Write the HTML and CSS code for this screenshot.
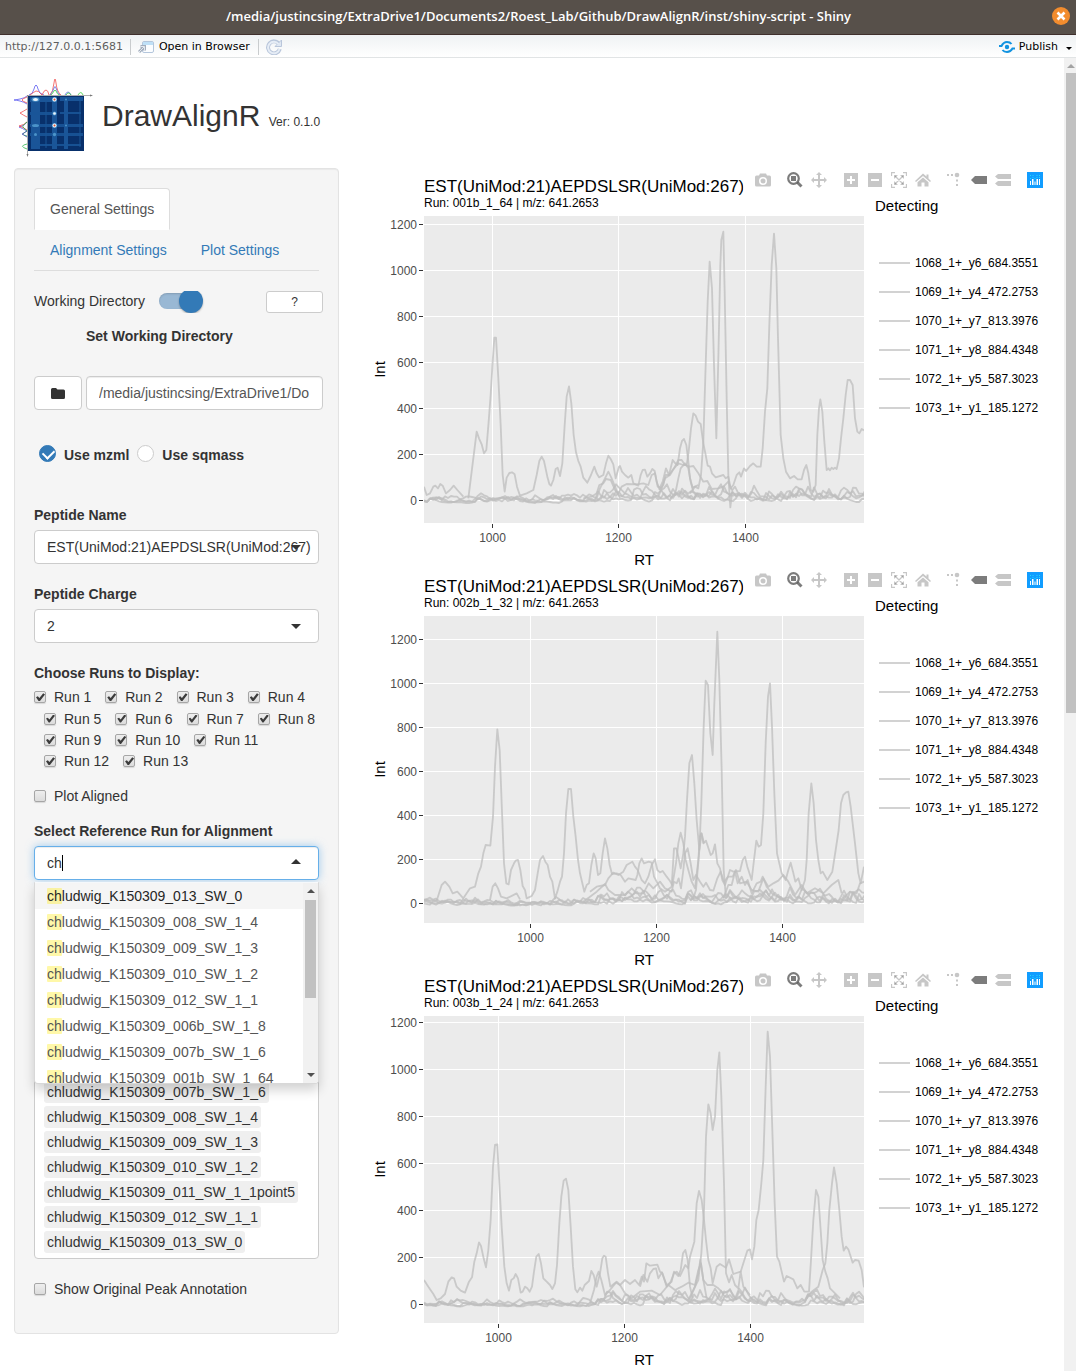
FILE: index.html
```html
<!DOCTYPE html>
<html lang="en">
<head>
<meta charset="utf-8">
<meta name="viewport" content="width=device-width, initial-scale=1">
<title>DrawAlignR</title>
<link rel="stylesheet" href="styles.css">
</head>
<body>
<svg class="sprite" aria-hidden="true">
  <symbol id="i-camera" viewBox="0 0 16 16"><path fill-rule="evenodd" d="M5 1.500h6l1 2h2.500q1.500 0 1.500 1.500v8q0 1.500-1.500 1.500h-13q-1.500 0-1.500-1.500v-8q0-1.500 1.500-1.500H4zM8 5a4 4 0 1 0 0 8a4 4 0 0 0 0-8zM8 6.500a2.500 2.500 0 1 1 0 5a2.500 2.500 0 0 1 0-5z"/></symbol>
  <symbol id="i-zoom" viewBox="0 0 16 16"><circle cx="6.500" cy="6.500" r="5.300" fill="none" stroke="currentColor" stroke-width="2.200"/><path d="M4 4h5v5H4z"/><path d="M10.500 10.500l4 4" stroke="currentColor" stroke-width="3"/></symbol>
  <symbol id="i-pan" viewBox="0 0 16 16"><path d="M8 0l3 3H9v4h4V5l3 3-3 3V9H9v4h2l-3 3-3-3h2V9H3v2L0 8l3-3v2h4V3H5z"/></symbol>
  <symbol id="i-plus" viewBox="0 0 16 16"><path fill-rule="evenodd" d="M1 1h14v14H1zM7 4v3H4v2h3v3h2V9h3V7H9V4z"/></symbol>
  <symbol id="i-minus" viewBox="0 0 16 16"><path fill-rule="evenodd" d="M1 1h14v14H1zM4 7v2h8V7z"/></symbol>
  <symbol id="i-auto" viewBox="0 0 16 16"><path d="M.500 4V.500H4M12 .500h3.500V4M15.500 12v3.500H12M4 15.500H.500V12M4 4l8 8M12 4l-8 8" fill="none" stroke="currentColor" stroke-width="1.300"/><path d="M3 3h4L3 7zM13 3v4L9 3zM13 13H9l4-4zM3 13V9l4 4z"/></symbol>
  <symbol id="i-home" viewBox="0 0 16 16"><path d="M8 1.500l3.500 3V2.500h2v4L16 9l-1 1-7-6-7 6-1-1zM8 5.500l5.500 4.700V14.500h-4v-4h-3v4h-4v-4.300z"/></symbol>
  <symbol id="i-spike" viewBox="0 0 16 16"><path d="M0 2h2v2H0zM4 2h2v2H4zM9 7.500h2v2H9zM9 12h2v2H9z"/><circle cx="10" cy="3" r="2.300"/></symbol>
  <symbol id="i-tag" viewBox="0 0 16 16"><path d="M0 8l4-4h12v8H4z"/></symbol>
  <symbol id="i-compare" viewBox="0 0 16 16"><path d="M0 4.500l3-2.500h13v5H3zM0 11.500l3-2.500h13v5H3z"/></symbol>
  <symbol id="i-plotly" viewBox="0 0 16 16"><path fill="#119dff" d="M0 0h16v16H0z"/><path fill="#fff" d="M3 9h1v4H3zM5 7h1.500v6H5zM7.500 9.500h1V13h-1zM9.500 7h1.500v6H9.500zM12 7h1v6h-1z"/><path fill="#25d8fd" d="M3 6h1v1H3zM3 3h1v1H3zM5.500 3h1v1h-1zM5.500 5h1v1h-1zM7.500 6h1v1h-1zM9.500 3h1v1h-1zM12 3h1v1h-1zM9.500 5h1v1h-1zM12 5h1v1h-1z"/></symbol>
</svg>

<div class="app">
  <header class="titlebar">
    <span class="titlebar-text">/media/justincsing/ExtraDrive1/Documents2/Roest_Lab/Github/DrawAlignR/inst/shiny-script - Shiny</span>
    <button class="close" type="button" aria-label="Close">
      <svg viewBox="0 0 18 18" width="18" height="18"><path d="M5.500 5.500l7 7M12.500 5.500l-7 7" stroke="#fff" stroke-width="2.600"/></svg>
    </button>
  </header>

  <nav class="toolbar">
    <span class="url">http://127.0.0.1:5681</span>
    <button class="tool" type="button">
      <svg viewBox="0 0 16 14" width="16" height="14"><rect x="4.500" y="1.500" width="11" height="11" rx="1.500" fill="#fbfdff" stroke="#b4c6dc"/><path d="M5 2h10v3H5z" fill="#bfe0f7"/><path d="M1 12l5-5M2.500 6.500h4v4" fill="none" stroke="#a3aebd" stroke-width="3"/><path d="M1 12l5-5M2.500 6.500h4v4" fill="none" stroke="#e3e8ef" stroke-width="1"/></svg>
      Open in Browser
    </button>
    <button class="tool" type="button" aria-label="Reload">
      <svg viewBox="0 0 16 16" width="16" height="16"><path d="M13 5a6 6 0 1 0 .800 5" fill="none" stroke="#b9c6db" stroke-width="4"/><path d="M15.500 1v6.500H9z" fill="#dfe7f2" stroke="#b9c6db"/><path d="M12.500 5a5.800 5.800 0 1 0 1 5" fill="none" stroke="#e6edf6" stroke-width="2"/></svg>
    </button>
    <button class="publish" type="button">
      <svg viewBox="0 0 16 12" width="16" height="12"><circle cx="8" cy="6" r="2.200" fill="#1293e0"/><path d="M0 5h2.500Q4.500 1 8 1q3 0 4.500 2M16 7.500h-2.500Q11.500 11 8 11q-3 0-4.500-2" fill="none" stroke="#1293e0" stroke-width="2"/></svg>
      Publish
      <span class="caret"></span>
    </button>
  </nav>

  <div class="viewport">
    <div class="page">
      <div class="brand">
        <svg class="logo" viewBox="0 0 80 80" width="80" height="80" role="img" aria-label="DrawAlignR logo">
          <g fill="none" stroke-width=".8">
            <path d="M15 17q4-1 5-6q1-4 2-4t2 4q1 5 6 6" stroke="#5a5af0"/>
            <path d="M16 17q4-3 6-4t6 4M28 17q2-5 4-5t3 5M36 17q3-3 4-12q.500-4 1-4t1 4q1 9 5 12" stroke="#f05050"/>
            <path d="M36 17q3-3 4-7q1-3 2 0q1 5 4 7M51 17q3-6 6 0" stroke="#5a6ae0"/>
            <path d="M37 17q2-2 3-4q1-2 2 0q1 3 3 4M52 17q3-4 5 0M64 17q3-5 5 0" stroke="#40d040"/>
            <path d="M13 18q-2 2-7 3t-6 1q2 0 6 1t7 3M13 44q-2 3-5 4t-3 1q3 1 8 4" stroke="#5a5af0"/>
            <path d="M13 19q-5 2-5 3t5 3M13 31q-3 2-7 4q3 2 7 4M13 44q-3 3-8 4q4 1 8 4" stroke="#f05050"/>
            <path d="M13 44q-5 4-4 5l4 4M13 53q-8 4 0 5M13 66q-9 2 0 5" stroke="#30b850"/>
            <path d="M13 53q-3 2-5 3q2 1 5 3" stroke="#5050c0"/>
          </g>
          <path d="M13 17.500h64M13.500 17v60" stroke="#777" fill="none" stroke-width=".6"/>
          <path d="M76 16.500l3 1-3 1zM12.500 76l1 3 1-3z" fill="#777"/>
          <path d="M14 18h56v55H14z" fill="#08306b"/>
          <g fill="#1a5598">
            <path d="M17 19h9v52h-9zM38 19h5v52h-5zM50 19h4v52h-4z"/>
            <path d="M16 19h26v5H16zM46 19h23v4H46z"/>
            <path d="M16 34h26v3H16zM46 34h21v2H46zM16 46h53v3H16zM16 55h53v3H16zM17 66h50v2H17z" opacity=".9"/>
            <path d="M31 20h2v50h-2zM65 21h2v48h-2z" opacity=".5"/>
          </g>
          <g fill="#4b93c9"><ellipse cx="21.500" cy="21.500" rx="4" ry="2.200"/><ellipse cx="21.500" cy="47.500" rx="3.500" ry="1.500"/><circle cx="40.500" cy="21.500" r="2.500"/><circle cx="40.500" cy="47.500" r="2.500"/><circle cx="40.500" cy="35.500" r="2"/><circle cx="40.500" cy="56.500" r="1.700"/><circle cx="52" cy="21.500" r="1"/><circle cx="52" cy="47.500" r="1"/><circle cx="21.500" cy="56.500" r="1.500"/></g>
          <g fill="#eaf3fa"><ellipse cx="21.500" cy="21.500" rx="2.500" ry="1.500"/><circle cx="40.500" cy="21.500" r="2"/><circle cx="40.500" cy="47.500" r="2"/><circle cx="40.500" cy="35.500" r="1.300"/></g>
          <circle cx="40.500" cy="21.500" r="1" fill="#e05030"/><circle cx="40.500" cy="47.500" r="1" fill="#e05030"/>
        </svg>
        <h1>DrawAlignR <small>Ver: 0.1.0</small></h1>
      </div>

      <div class="columns">
        <form class="sidebar">
          <ul class="tabs">
            <li><a class="active" href="#general">General Settings</a></li>
            <li><a href="#alignment">Alignment Settings</a></li>
            <li><a href="#plot">Plot Settings</a></li>
          </ul>

          <div class="wd-row">
            <label for="wd">Working Directory</label>
            <input class="switch" id="wd" type="checkbox" checked>
            <button class="btn help" type="button">?</button>
          </div>
          <label class="wd-title" for="dir">Set Working Directory</label>
          <div class="dir-row">
            <button class="btn folder" type="button" aria-label="Browse">
              <svg viewBox="0 0 14 11" width="14" height="11"><path d="M0 1.500Q0 0 1.500 0H5l1.500 1.500h6Q14 1.500 14 3v6.500q0 1.500-1.500 1.500h-11Q0 11 0 9.500z" fill="#333"/></svg>
            </button>
            <input class="field" id="dir" type="text" value="/media/justincsing/ExtraDrive1/Do">
          </div>

          <div class="radios">
            <label><input type="radio" name="src" checked>Use mzml</label>
            <label><input type="radio" name="src">Use sqmass</label>
          </div>

          <div class="group">
            <label class="title" for="pep">Peptide Name</label>
            <div class="control"><select class="field" id="pep"><option>EST(UniMod:21)AEPDSLSR(UniMod:267)</option></select></div>
          </div>
          <div class="group">
            <label class="title" for="charge">Peptide Charge</label>
            <div class="control"><select class="field" id="charge"><option>2</option></select></div>
          </div>

          <fieldset class="runs">
            <legend class="title">Choose Runs to Display:</legend>
            <label><input class="tick" type="checkbox" checked>Run 1</label>
            <label><input class="tick" type="checkbox" checked>Run 2</label>
            <label><input class="tick" type="checkbox" checked>Run 3</label>
            <label><input class="tick" type="checkbox" checked>Run 4</label>
            <label><input class="tick" type="checkbox" checked>Run 5</label>
            <label><input class="tick" type="checkbox" checked>Run 6</label>
            <label><input class="tick" type="checkbox" checked>Run 7</label>
            <label><input class="tick" type="checkbox" checked>Run 8</label>
            <label><input class="tick" type="checkbox" checked>Run 9</label>
            <label><input class="tick" type="checkbox" checked>Run 10</label>
            <label><input class="tick" type="checkbox" checked>Run 11</label>
            <label><input class="tick" type="checkbox" checked>Run 12</label>
            <label><input class="tick" type="checkbox" checked>Run 13</label>
          </fieldset>

          <label class="check"><input class="tick" type="checkbox">Plot Aligned</label>

          <div class="group reference">
            <label class="title" for="ref">Select Reference Run for Alignment</label>
            <div class="control open">
              <input class="field" id="ref" type="text" value="ch" autocomplete="off">
              <span class="cursor"></span>
              <div class="dropdown">
                <ul class="options">
                  <li class="active"><mark>ch</mark>ludwig_K150309_013_SW_0</li>
                  <li><mark>ch</mark>ludwig_K150309_008_SW_1_4</li>
                  <li><mark>ch</mark>ludwig_K150309_009_SW_1_3</li>
                  <li><mark>ch</mark>ludwig_K150309_010_SW_1_2</li>
                  <li><mark>ch</mark>ludwig_K150309_012_SW_1_1</li>
                  <li><mark>ch</mark>ludwig_K150309_006b_SW_1_8</li>
                  <li><mark>ch</mark>ludwig_K150309_007b_SW_1_6</li>
                  <li><mark>ch</mark>ludwig_K150309_001b_SW_1_64</li>
                </ul>
                <div class="scroll inner"><i class="up"></i><i class="thumb"></i><i class="down"></i></div>
              </div>
            </div>
          </div>

          <ul class="chips">
            <li>chludwig_K150309_007b_SW_1_6</li>
            <li>chludwig_K150309_008_SW_1_4</li>
            <li>chludwig_K150309_009_SW_1_3</li>
            <li>chludwig_K150309_010_SW_1_2</li>
            <li>chludwig_K150309_011_SW_1_1point5</li>
            <li>chludwig_K150309_012_SW_1_1</li>
            <li>chludwig_K150309_013_SW_0</li>
          </ul>

          <label class="check last"><input class="tick" type="checkbox">Show Original Peak Annotation</label>
        </form>

        <main class="plots" id="plots"></main>
      </div>
    </div>
    <div class="scroll outer"><i class="up"></i><i class="thumb"></i></div>
  </div>
</div>
<script src="charts.js"></script>
</body>
</html>
```

FILE: styles.css
```css
* { box-sizing: border-box; }

body {
  margin: 0;
  font: 14px/20px "Liberation Sans", Arial, sans-serif;
  color: #333;
  background: #fff;
}

ul { list-style: none; margin: 0; padding: 0; }
button, input, select { font: inherit; color: inherit; margin: 0; }
svg { display: block; }
.sprite { display: none; }

.app { height: 100vh; display: flex; flex-direction: column; }

/* window chrome */
.titlebar {
  flex: none;
  position: relative;
  height: 35px;
  display: flex;
  align-items: center;
  justify-content: center;
  padding: 0 0 3px 1px;
  background: #57504a;
  border-bottom: 1px solid #3f2f2c;
  color: #fff;
  font: 600 13px/18px "Open Sans", "Noto Sans", sans-serif;
}
.close {
  position: absolute;
  right: 6px;
  top: 7px;
  padding: 0;
  border: 0;
  border-radius: 50%;
  background: #f28c2e;
}

.toolbar {
  flex: none;
  height: 23px;
  display: flex;
  align-items: center;
  padding: 2px 4px 0 5px;
  background: linear-gradient(#eff2f4, #fff);
  border-bottom: 1px solid #e1e4e5;
  font: 11px/16px "DejaVu Sans", sans-serif;
  color: #000;
}
.url { color: #5f5f5f; padding-right: 7px; }
.tool, .publish {
  display: flex;
  align-items: center;
  gap: 5px;
  padding: 0 8px 0 7px;
  border: 0;
  background: none;
}
.tool { border-left: 1px solid #c9ccce; }
.publish { margin-left: auto; padding: 0; gap: 4px; }
.caret { margin: 2px 0 0 4px; border: 3px solid transparent; border-top-color: #000; border-bottom: 0; }

.viewport { flex: 1; min-height: 0; display: flex; overflow: hidden; }
.page { flex: 1; min-width: 0; padding: 20px 15px 0 14px; }

/* heading */
.brand { display: flex; align-items: center; gap: 8px; padding-bottom: 10px; }
h1 { margin: 2px 0 0; font-size: 30px; font-weight: 400; line-height: 33px; }
h1 small { font-size: 12px; }

.columns { display: flex; align-items: flex-start; gap: 31px; }

/* settings panel */
.sidebar {
  flex: none;
  width: 325px;
  padding: 19px;
  background: #f5f5f5;
  border: 1px solid #e3e3e3;
  border-radius: 4px;
  box-shadow: inset 0 1px 1px rgba(0, 0, 0, .05);
}

.tabs { display: flex; flex-wrap: wrap; border-bottom: 1px solid #ddd; }
.tabs li { margin-bottom: -1px; }
.tabs a {
  display: block;
  margin-right: 2px;
  padding: 10px 15px;
  border: 1px solid transparent;
  border-radius: 4px 4px 0 0;
  color: #337ab7;
  text-decoration: none;
}
.tabs a.active { color: #555; background: #fff; border-color: #ddd #ddd transparent; }

.btn, .field {
  border: 1px solid #ccc;
  border-radius: 4px;
  background: #fff;
}
.btn { display: flex; align-items: center; justify-content: center; padding: 0; }

.wd-row { display: flex; height: 22px; margin: 20px -4px 0 0; }
.help { width: 57px; height: 22px; margin-left: auto; border-radius: 3px; font-size: 12px; }
.switch {
  appearance: none;
  position: relative;
  width: 48px;
  margin-left: 14px;
  overflow: hidden;
}
.switch::before {
  content: "";
  position: absolute;
  left: 0; top: 2px;
  width: 36px; height: 16px;
  border-radius: 8px;
  background: #99b8d4;
  box-shadow: inset 0 1px 2px rgba(0, 0, 0, .15);
}
.switch::after {
  content: "";
  position: absolute;
  left: 20px; top: -2px;
  width: 24px; height: 24px;
  border-radius: 50%;
  background: #337ab7;
  box-shadow: 0 1px 2px rgba(0, 0, 0, .3);
}

.wd-title { display: block; margin: 13px 0 30px 52px; font-weight: 700; }
.dir-row { display: flex; gap: 4px; margin-right: -4px; }
.folder { width: 48px; height: 34px; }

.field {
  display: block;
  width: 100%;
  height: 34px;
  padding: 6px 12px;
  appearance: none;
  outline: 0;
  box-shadow: inset 0 1px 1px rgba(0, 0, 0, .075);
}
.dir-row .field { flex: 1; min-width: 0; color: #555; }
select.field { padding-right: 0; box-shadow: none; }

.radios { display: flex; gap: 8px; margin: 35px 0 40px; padding-left: 5px; font-weight: 700; }
.radios label { display: flex; align-items: center; gap: 8px; height: 20px; }
.radios input {
  appearance: none;
  position: relative;
  width: 17px; height: 17px;
  margin-top: -3px;
  border: 1px solid #ccc;
  border-radius: 50%;
  background: #fff;
}
.radios input:checked { background: #337ab7; border-color: #337ab7; }
.radios input:checked::after {
  content: "";
  position: absolute;
  left: 3px; top: 3px;
  width: 9px; height: 6px;
  border: solid #fff;
  border-width: 0 0 2px 2px;
  transform: rotate(-45deg);
}

.title { display: block; padding: 0; margin-bottom: 5px; font-weight: 700; }
.group { margin-bottom: 20px; }
.control { position: relative; }
.control::after {
  content: "";
  position: absolute;
  right: 18px; top: 15px;
  border: 5px solid transparent;
  border-top-color: #333;
  border-bottom: 0;
  pointer-events: none;
}
.control.open::after { top: 13px; border: 5px solid transparent; border-bottom-color: #333; border-top: 0; }

.runs { border: 0; margin: 0 0 15px; padding: 0; line-height: 21px; }
.runs .title { margin-bottom: 2px; }
.runs label, .check { display: inline-flex; align-items: center; gap: 8px; line-height: 20px; vertical-align: middle; }
.runs label + label { margin-left: 10px; }
.check { display: flex; margin-bottom: 15px; }
.tick {
  appearance: none;
  position: relative;
  flex: none;
  width: 12px; height: 12px;
  border: 1px solid #a6a6a6;
  border-radius: 2px;
  background: linear-gradient(#eee, #dcdcdc);
  box-shadow: 0 1px 1px rgba(0, 0, 0, .12);
}
.tick:checked::after {
  content: "";
  position: absolute;
  left: 1px; top: 1px;
  width: 9px; height: 8px;
  background: #3c3c3c;
  clip-path: polygon(0 50%, 20% 38%, 38% 60%, 80% 0, 100% 15%, 42% 100%, 30% 100%);
}

.reference { margin-bottom: 45px; }
.open .field { border-color: #66afe9; box-shadow: inset 0 1px 1px rgba(0, 0, 0, .075), 0 0 8px rgba(102, 175, 233, .6); }
.cursor { position: absolute; left: 28px; top: 9px; width: 1px; height: 16px; background: #000; }
.dropdown {
  position: absolute;
  z-index: 2;
  inset: 36px 0 auto;
  display: flex;
  height: 202px;
  padding-top: 1px;
  overflow: hidden;
  background: #fff;
  border: 1px solid #d8d8d8;
  border-top: 0;
  border-radius: 0 0 4px 4px;
  box-shadow: 0 6px 12px rgba(0, 0, 0, .18);
  clip-path: inset(0 -16px -20px);
}
.options { flex: 1; color: #555; }
.options li { padding: 3px 12px; }
.options .active { background: #f5f5f5; color: #262626; }
mark { color: inherit; background: rgba(255, 237, 40, .4); border-radius: 1px; }

.scroll { flex: none; display: flex; flex-direction: column; align-items: center; background: #f1f1f1; }
.up, .down { border: 4px solid transparent; }
.up { border-bottom: 4px solid #505050; border-top: 0; }
.down { border-top: 4px solid #505050; border-bottom: 0; margin-top: auto; }
.thumb { background: #c1c1c1; }
.inner { width: 15px; padding: 6px 0; }
.inner .thumb { width: 11px; height: 98px; margin-top: 7px; }
.outer { width: 12px; padding: 6px 0 0 2px; align-items: stretch; }
.outer .up { align-self: center; border-bottom-color: #a3a3a3; }
.outer .thumb { height: 49%; margin-top: 5px; }

.chips {
  display: flex;
  flex-direction: column;
  align-items: flex-start;
  justify-content: flex-end;
  gap: 3px;
  min-height: 334px;
  margin-bottom: 20px;
  padding: 5px 9px;
  background: #fff;
  border: 1px solid #ccc;
  border-radius: 4px;
}
.chips li { padding: 1px 3px; background: #efefef; border-radius: 3px; }

/* plots */
.plots { flex: 1; min-width: 0; }
.plot {
  position: relative;
  display: grid;
  grid-template-columns: 1fr 174px;
  height: 400px;
  color: #000;
}
.plot > svg { width: 100%; height: 400px; overflow: visible; }
.plot text { font-family: "Liberation Sans", Arial, sans-serif; fill: #000; }
.plot .plot-title { font-size: 17px; }
.plot .sub { font-size: 12px; }
.plot .axis { font-size: 15px; text-anchor: middle; }
.plot .tick-label { font-size: 12px; fill: #4d4d4d; }
.legend { padding-top: 28px; font-size: 15px; white-space: nowrap; }
.legend ul { margin-top: 32px; font-size: 12px; }
.legend li { display: flex; align-items: center; gap: 5px; height: 29px; padding-left: 4px; }
.legend li::before { content: ""; width: 31px; height: 2px; background: #d2d2d2; }
.modebar {
  position: absolute;
  top: 1px; right: 2px;
  display: flex;
  background: rgba(255, 255, 255, .7);
}
.modebar div { display: flex; padding-left: 8px; }
.modebar button { padding: 3px 4px; border: 0; background: none; color: rgba(68, 68, 68, .3); }
.modebar button.on { color: rgba(68, 68, 68, .7); }
.modebar svg { width: 16px; height: 16px; fill: currentColor; }
```

FILE: charts.js
```js
// Traces are digitised at three units per pixel; "corner" is the plot area's top-left in those units.
const AREA = { x: 54, y: 48, w: 440, h: 307 };
const charts = [
  { run: "001b_1_64", corner: [162, 153], zero: 1007, step: 138, xt: [368, 746, 1126], traces: [
    "295,1000 305,920 320,800 327,820 335,838 342,865 349,855 356,770 362,690 368,590 373,518 378,518 385,640 392,780 398,930 404,980 410,938 418,924 426,922 434,928 441,965 450,992 470,985 490,975 500,930 508,888 515,875 522,888 532,935 538,957 543,962 550,945 557,912 563,908 570,933 577,895 584,780 590,695 597,664 604,715 611,810 618,862 625,888 632,905 640,938 652,953 663,930 673,905 680,925 687,937 700,930 708,895 715,872 722,882 730,898 737,940 747,905 750,903 756,920 765,930 775,938 784,930 790,955 805,962 812,930 818,915 825,914 832,935 840,925 847,912 854,918 860,950 868,972 878,950 888,910 897,930 908,885 916,895 923,900 930,850 936,828 942,822 949,840 955,890 960,940 968,968 985,960",
    "868,975 880,960 887,930 897,930 908,915 925,895 940,900 950,900 956,860 963,790 970,745 977,752 984,770 992,777 1000,835 1007,870 1013,902 1020,905 1026,925 1037,937 1060,930 1067,940 1075,935 1082,970 1090,960 1100,930 1108,922 1113,935 1122,910 1128,918 1140,903 1150,895 1160,905 1172,905 1178,850 1185,740 1192,670 1198,480 1205,300 1212,206 1219,310 1224,520 1232,810 1240,880 1248,920 1260,940 1272,933 1283,943 1295,943 1302,915 1309,900 1315,925 1322,975 1330,980 1337,960 1342,810 1347,730 1351,703 1357,740 1363,830 1370,915 1375,910 1380,916 1385,908 1390,912 1395,908 1400,912 1407,880 1413,820 1420,760 1427,690 1433,645 1440,645 1448,660 1455,760 1462,800 1468,805 1475,792 1482,796",
    "960,985 975,965 985,970 993,930 1000,830 1007,600 1013,410 1019,290 1026,370 1032,600 1039,820 1045,580 1051,300 1054,225 1060,200 1064,380 1070,700 1075,930 1081,1027 1087,975 1095,965 1105,985",
    "640,1000 665,995 680,985 688,960 700,955 708,942 722,945 735,975 745,985 755,965 770,957 800,958 820,955 835,960 845,930 855,925 863,965 875,970 885,940 900,930 912,910 925,885 935,885 945,900 960,905 970,903 985,925 1000,950 1012,948 1025,972 1045,970 1060,965 1075,950 1085,975",
    "162,965 170,990 180,985 190,965 196,962 204,970 211,957 218,962 228,985 240,975 251,962 262,975 280,995",
    "680,1000 690,970 705,940 715,920 724,938 735,965 750,1000",
    "900,1000 915,990 925,940 932,910 945,895 955,910 962,950 970,980 985,990"
  ] },
  { run: "002b_1_32", corner: [162, 138], zero: 1000, step: 132, xt: [481, 859, 1237], traces: [
    "162,990 200,992 215,945 225,935 238,950 248,970 262,965 280,985 300,955 315,950 325,910 333,890 340,850 347,825 361,827 369,740 375,590 382,478 389,540 395,700 402,880 409,940 416,943 423,900 432,880 437,872 444,870 451,900 458,948 465,960 470,985 485,978 495,960 503,910 510,870 519,858 526,875 533,885 540,920 547,935 555,985 562,965 570,935 576,920 582,850 588,730 595,657 603,657 610,740 617,800 624,870 630,910 643,965 650,945 657,940 664,885 671,850 677,865 684,915 691,910 698,850 705,805 712,835 719,885 726,912 740,910 752,915 765,935 775,925 797,930 802,915 808,880 815,865 822,880 836,875 845,878 852,920 860,935 870,955 885,965 905,950 912,835 919,835 925,860 932,895 940,850 945,800 951,690 958,580 966,555 973,640 980,750 988,840 994,700 1001,470 1007,332 1014,345 1021,490 1028,555 1033,400 1042,185 1048,330 1055,600 1061,900 1068,985 1080,960 1100,985",
    "660,965 680,950 705,945 715,925 730,908 745,915 760,905 770,885 787,875 795,890 803,900 815,930 825,940 835,920 845,885 855,868 862,900 870,907 878,903 890,920 900,933 907,945 918,880 925,820 932,788 940,820 947,870 955,900 965,935 975,955 985,870 990,800 994,790 1000,820 1008,812 1022,855 1028,850 1035,823 1042,880 1050,895 1057,930 1065,945 1080,900 1090,905 1110,903 1118,870 1125,860 1132,890 1145,930 1152,870 1159,812 1166,830 1173,825 1180,730 1187,520 1194,380 1200,340 1206,470 1213,670 1221,850 1235,910 1247,930 1255,900 1262,878 1269,905 1276,935 1285,925 1295,960 1305,930 1310,870 1316,730 1324,640 1331,700 1338,810 1345,870 1352,910 1358,905 1372,930 1387,905 1397,840 1406,780 1413,700 1420,675 1428,667 1435,665 1442,710 1455,820 1465,910 1472,940 1482,890",
    "640,995 680,965 705,942 715,960 735,975 765,975 785,955 800,970 820,970 836,940 850,955 870,935 885,955 905,965 912,935 920,940 926,925 933,955 940,900 945,850 953,835 962,880 970,930 978,915 990,935 1000,950 1008,938 1020,960 1030,962 1042,925 1052,905 1062,935 1075,920 1088,920 1098,900 1110,940 1130,935 1145,960 1165,965 1180,925 1195,950 1210,940 1225,932 1240,915 1255,935 1275,975 1295,945 1310,970 1335,955 1360,970 1385,945 1405,930 1415,970",
    "960,990 970,985 978,960 988,840 995,790 1002,820", "360,990 368,950 376,940 384,955 393,980 410,985 440,970 450,988",
    "1060,985 1075,945 1085,945 1095,905 1103,940 1115,920 1125,945 1133,930 1145,970 1160,940 1172,935 1178,920 1190,950 1210,975", "1420,985 1440,965 1460,970 1470,940 1482,935"
  ] },
  { run: "003b_1_24", corner: [162, 138], zero: 1003, step: 141, xt: [385, 763, 1141], traces: [
    "162,930 175,950 190,972 200,990 212,985 225,972 235,935 245,922 252,925 260,950 272,962 285,968 297,935 306,922 313,875 320,850 327,817 333,828 341,865 348,892 355,840 362,750 369,590 375,525 382,523 388,640 395,770 403,890 410,940 417,962 424,930 431,925 437,912 444,925 452,968 458,965 465,950 472,955 479,965 486,950 492,905 499,860 506,852 513,880 520,925 530,935 540,945 547,957 555,940 561,885 568,760 574,680 581,632 588,626 595,660 602,770 609,890 616,958 622,967 630,953 637,962 644,945 657,933 664,903 671,915 680,950 690,910 697,865 702,857 707,860 714,910 721,950 740,935 750,945 765,930 780,942 795,930 807,945 815,920 822,935 829,880 840,887 862,884 870,905 877,910 890,945 905,935 912,905 925,918 932,900 939,850 946,840 953,870 960,950 968,985",
    "810,950 820,915 832,935 840,910 850,897 858,895 865,925 876,907 890,950 900,940 912,910 920,905 930,918 946,885 955,895 960,860 973,815 980,700 987,663 995,690 1001,740 1008,810 1015,870 1022,895 1028,940 1040,890 1050,882 1068,893 1077,868 1090,912 1112,905 1120,880 1132,842 1140,838 1146,868 1153,830 1159,750 1166,720 1174,640 1180,570 1187,350 1193,185 1200,260 1207,480 1214,700 1221,860 1228,875 1242,935 1250,918 1270,928 1282,955 1292,945 1303,965 1317,965 1323,870 1330,750 1338,660 1345,680 1352,780 1358,870 1366,905 1373,925 1380,955 1390,965 1410,985",
    "955,990 970,960 985,930 994,850 1002,720 1008,500 1015,403 1022,430 1028,480 1035,440 1042,300 1048,247 1054,380 1062,640 1068,910 1077,937 1085,915 1095,945 1105,955 1112,905 1120,950 1140,975",
    "1310,985 1325,965 1345,950 1358,900 1366,880 1372,820 1378,720 1386,640 1392,592 1400,640 1408,720 1415,800 1421,842 1428,830 1435,838 1448,878 1455,870 1466,872 1475,900 1482,952",
    "660,1000 672,960 680,920 686,905 694,930 705,975 720,960 738,938 750,945 765,970 785,985 810,965 845,962 870,975 895,945 915,960 935,950 955,938 975,945 985,900 993,880 1000,930 1012,945 1030,945 1045,955 1060,970 1080,960 1100,990",
    "960,985 975,950 985,910 991,870 1000,930 1010,985"
  ] }
];
const legend = ["1068_1+_y6_684.3551", "1069_1+_y4_472.2753", "1070_1+_y7_813.3976", "1071_1+_y8_884.4348", "1072_1+_y5_587.3023", "1073_1+_y1_185.1272"];
const icons = [["camera"], ["zoom", "pan"], ["plus", "minus", "auto", "home"], ["spike", "tag", "compare"], ["plotly"]];
const names = { camera: "Download plot", zoom: "Zoom", pan: "Pan", plus: "Zoom in", minus: "Zoom out", auto: "Autoscale", home: "Reset axes", spike: "Toggle spike lines", tag: "Show closest data", compare: "Compare data", plotly: "Plotly" };

// Low-intensity baseline signal: repeatable random values, stronger in the later half of the run.
function baseline(seed, zero) {
  let s = seed * 7919 + 13, level = 5;
  const next = () => (s = (s * 16807) % 2147483647) / 2147483647;
  const pts = [];
  for (let x = 162; x <= 1485; x += 9) {
    const amp = x < 680 ? 20 : 42;
    level = level * .6 + (next() * next() * amp * 1.7 - 5) * .55;
    pts.push(x + "," + Math.round(zero + 2 - level));
  }
  return pts.join(" ");
}

function draw(c, n) {
  const { x, y, w, h } = AREA;
  const px = v => x + (v - c.corner[0]) / 3;
  const py = v => y + (v - c.corner[1]) / 3;
  let grid = "", labels = "";
  for (let i = 0; i <= 6; i++) {
    const gy = Math.floor(py(c.zero - i * c.step));
    grid += `<path d="M${x} ${gy + .5}h${w}" stroke="#fff"/><path d="M${x - 5} ${gy + .5}h4" stroke="#333"/>`;
    labels += `<text class="tick-label" x="${x - 7}" y="${gy + 5}" text-anchor="end">${i * 200}</text>`;
  }
  c.xt.forEach((t, i) => {
    const gx = Math.floor(px(t));
    grid += `<path d="M${gx + .5} ${y}v${h}" stroke="#fff"/><path d="M${gx + .5} ${y + h + 1}v4" stroke="#333"/>`;
    labels += `<text class="tick-label" x="${gx + .5}" y="${y + h + 19}" text-anchor="middle">${1000 + i * 200}</text>`;
  });
  const traces = c.traces.concat([1, 2, 3, 4].map(k => baseline(k + n * 10, c.zero)));
  return `<article class="plot">
    <svg viewBox="0 0 500 400" preserveAspectRatio="xMinYMin meet">
      <clipPath id="clip${n}"><rect x="${x}" y="${y}" width="${w}" height="${h}"/></clipPath>
      <rect x="${x}" y="${y}" width="${w}" height="${h}" fill="#ebebeb"/>${grid}
      <g clip-path="url(#clip${n})"><g transform="translate(${x} ${y}) scale(${1 / 3}) translate(${-c.corner[0]} ${-c.corner[1]})" fill="none" stroke="#bebebe" stroke-opacity=".75" stroke-width="5.500" stroke-linejoin="round">
        ${traces.map(p => `<polyline points="${p}"/>`).join("")}</g></g>
      ${labels}
      <text class="plot-title" x="${x}" y="24">EST(UniMod:21)AEPDSLSR(UniMod:267)</text>
      <text class="sub" x="${x}" y="39">Run: ${c.run} | m/z: 641.2653</text>
      <text class="axis" x="${x + w / 2}" y="397">RT</text>
      <text class="axis" transform="translate(15 ${y + h / 2}) rotate(-90)">Int</text>
    </svg>
    <div class="legend">Detecting<ul>${legend.map(t => `<li>${t}</li>`).join("")}</ul></div>
    <div class="modebar">${icons.map(g => `<div>${g.map(k => `<button type="button" aria-label="${names[k]}"${k === "zoom" || k === "tag" ? ' class="on"' : ""}><svg><use href="#i-${k}"/></svg></button>`).join("")}</div>`).join("")}</div>
  </article>`;
}
document.getElementById("plots").innerHTML = charts.map(draw).join("");
```
